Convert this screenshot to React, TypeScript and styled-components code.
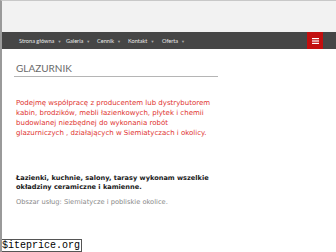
import React from "react";
import styled, { createGlobalStyle } from "styled-components";

const Global = createGlobalStyle`
  html, body { margin: 0; padding: 0; background: #fff; }
  body { width: 336px; height: 252px; overflow: hidden; }
`;

const Page = styled.div`
  position: relative;
  width: 336px;
  height: 252px;
  box-sizing: border-box;
  border-left: 2px solid #9a9a9a;
  border-top: 1px solid #c8c8c8;
  overflow: hidden;
`;

const TopBand = styled.div`
  height: 31px;
  background: #f2f2f2;
`;

const NavBar = styled.nav`
  height: 17px;
  background: #464646;
  display: flex;
  align-items: center;
  padding-left: 17px;
  padding-right: 13px;
`;

const Menu = styled.ul`
  display: flex;
  list-style: none;
  margin: 0;
  padding: 0;
  flex: 1;
`;

const MenuItem = styled.li<{ $w: number }>`
  width: ${(p) => p.$w}px;
  font-family: Lato, "Liberation Sans", sans-serif;
  font-size: 5.6px;
  color: #e8e8e8;
  white-space: nowrap;
`;

const Caret = styled.span`
  font-size: 4px;
  color: #aaa;
  margin-left: 3px;
  position: relative;
  top: -0.5px;
`;

const Burger = styled.button`
  width: 16px;
  height: 17px;
  border: 0;
  padding: 0;
  background: #c20f0f;
  display: flex;
  align-items: center;
  justify-content: center;
`;

const Content = styled.main`
  padding: 12px 0 0 12px;
`;

const Title = styled.h1`
  margin: 0;
  width: 202px;
  font-family: Lato, "Liberation Sans", sans-serif;
  font-weight: 400;
  font-size: 10px;
  line-height: 14px;
  color: #6a6a6a;
  padding: 0 0 1px 2px;
  border-bottom: 1px solid #b5b5b5;
`;

const Para = styled.p<{ $color: string; $bold?: boolean; $size?: number; $lh?: number }>`
  margin: 0;
  font-family: "DejaVu Sans", sans-serif;
  font-size: ${(p) => p.$size ?? 7}px;
  line-height: ${(p) => p.$lh ?? 10}px;
  color: ${(p) => p.$color};
  font-weight: ${(p) => (p.$bold ? 700 : 400)};
  white-space: nowrap;
`;

const RedBlock = styled.div`
  margin-top: 21px;
  padding-left: 2px;
`;

const BlackBlock = styled.div`
  margin-top: 36px;
  padding-left: 2px;
  display: flex;
  flex-direction: column;
  gap: 5px;
`;

const Watermark = styled.div`
  position: absolute;
  left: -2px;
  bottom: 0;
  background: #fff;
  border: 1px solid #555;
  font-family: "Liberation Mono", monospace;
  font-size: 10px;
  line-height: 11px;
  padding: 0 1px;
  color: #000;
`;

const items: [string, number][] = [
  ["Strona główna", 47],
  ["Galeria", 31],
  ["Cennik", 31],
  ["Kontakt", 34],
  ["Oferta", 30],
];

export default function App() {
  return (
    <>
      <Global />
      <Page>
        <TopBand />
        <NavBar>
          <Menu>
            {items.map(([t, w]) => (
              <MenuItem key={t} $w={w}>
                {t}
                <Caret>▼</Caret>
              </MenuItem>
            ))}
          </Menu>
          <Burger aria-label="menu">
            <svg width="7" height="6" viewBox="0 0 7 6">
              <rect x="0" y="0" width="7" height="1.2" fill="#fff" />
              <rect x="0" y="2.4" width="7" height="1.2" fill="#fff" />
              <rect x="0" y="4.8" width="7" height="1.2" fill="#fff" />
            </svg>
          </Burger>
        </NavBar>
        <Content>
          <Title>GLAZURNIK</Title>
          <RedBlock>
            <Para $color="#e0322e">Podejmę współpracę z producentem lub dystrybutorem</Para>
            <Para $color="#e0322e">kabin, brodzików, mebli łazienkowych, płytek i chemii</Para>
            <Para $color="#e0322e">budowlanej niezbędnej do wykonania robót</Para>
            <Para $color="#e0322e">glazurniczych , działających w Siemiatyczach i okolicy.</Para>
          </RedBlock>
          <BlackBlock>
            <div>
              <Para $color="#1a1a1a" $bold $size={6.6} $lh={9}>Łazienki, kuchnie, salony, tarasy wykonam wszelkie</Para>
              <Para $color="#1a1a1a" $bold $size={6.6} $lh={9}>okładziny ceramiczne i kamienne.</Para>
            </div>
            <Para $color="#8a8a8a" $size={6.7}>Obszar usług: Siemiatycze i pobliskie okolice.</Para>
          </BlackBlock>
        </Content>
        <Watermark>$iteprice.org</Watermark>
      </Page>
    </>
  );
}
